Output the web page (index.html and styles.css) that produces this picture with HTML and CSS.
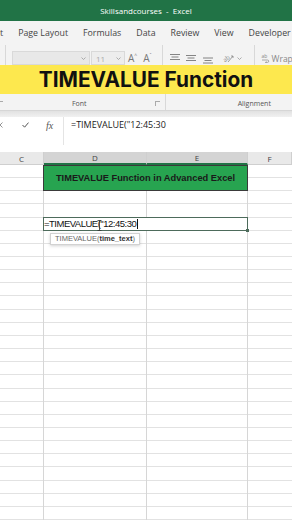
FILE: index.html
```html
<!DOCTYPE html>
<html lang="en">
<head>
  <meta charset="UTF-8">
  <meta name="viewport" content="width=device-width, initial-scale=1.0">
  <title>TIMEVALUE Function</title>
  <link rel="stylesheet" href="styles.css">
</head>
<body>
  <div class="titlebar">Skillsandcourses&nbsp; - &nbsp;Excel</div>

  <div class="tabs">
    <span class="tab tab-cut">t</span>
    <span class="tab">Page Layout</span>
    <span class="tab">Formulas</span>
    <span class="tab">Data</span>
    <span class="tab">Review</span>
    <span class="tab">View</span>
    <span class="tab">Developer</span>
  </div>

  <div class="ribbon">
    <div class="controls">
      <span class="vsep sep-first"></span>
      <div class="select font-name">
        <svg class="chev" width="5" height="3" viewBox="0 0 5 3"><polyline points="0.5,0.5 2.5,2.5 4.5,0.5" fill="none" stroke="#999" stroke-width="0.8"/></svg>
      </div>
      <div class="select font-size">
        <span>11</span>
        <svg class="chev" width="5" height="3" viewBox="0 0 5 3"><polyline points="0.5,0.5 2.5,2.5 4.5,0.5" fill="none" stroke="#999" stroke-width="0.8"/></svg>
      </div>
      <span class="size-btn grow">A<small>^</small></span>
      <span class="size-btn shrink">A<small>ˇ</small></span>
      <span class="vsep sep-font"></span>

      <!-- alignment group -->
      <svg class="align align-top" width="10" height="8" viewBox="0 0 10 8">
        <path d="M0 0.5H10M1.5 3H8.5M0 5.5H10" stroke="#777" stroke-width="0.9"/>
      </svg>
      <svg class="align align-mid" width="10" height="8" viewBox="0 0 10 8">
        <path d="M0 1.5H10M1.5 4H8.5M0 6.5H10" stroke="#777" stroke-width="0.9"/>
      </svg>
      <svg class="align align-bot" width="10" height="9" viewBox="0 0 10 9">
        <path d="M0 3H10M1.5 5.5H8.5M0 8H10" stroke="#777" stroke-width="0.9"/>
      </svg>
      <svg class="orient" width="12" height="10" viewBox="0 0 12 10">
        <text x="1" y="8" font-size="6" fill="#888" font-family="Open Sans, sans-serif" transform="rotate(-40 4 6)">ab</text>
        <path d="M6 9L11 3M9 3H11V5" fill="none" stroke="#888" stroke-width="0.8"/>
      </svg>
      <svg class="chev orient-chev" width="5" height="3" viewBox="0 0 5 3"><polyline points="0.5,0.5 2.5,2.5 4.5,0.5" fill="none" stroke="#999" stroke-width="0.8"/></svg>
      <span class="vsep sep-align"></span>
      <svg class="wrap-icon" width="9" height="10" viewBox="0 0 9 10">
        <text x="0.5" y="4.5" font-size="5" fill="#888" font-family="Open Sans, sans-serif">ab</text>
        <path d="M1 7H6.5A1.2 1.2 0 0 1 6.5 9.4H4.5M5.5 8.6L4.5 9.4L5.5 10" fill="none" stroke="#888" stroke-width="0.7"/>
      </svg>
      <span class="wrap-text">Wrap</span>
    </div>

    <div class="banner">TIMEVALUE Function</div>

    <div class="labels">
      <span class="launcher launcher-cut"></span>
      <span class="group-name group-font">Font</span>
      <span class="launcher launcher-font"></span>
      <span class="vsep sep-label"></span>
      <span class="group-name group-align">Alignment</span>
    </div>
  </div>
  <div class="ribbon-shadow"></div>

  <div class="formula-bar">
    <div class="fx-zone">
      <svg class="cancel" width="6" height="6" viewBox="0 0 6 6"><path d="M0.5 0.5L5.5 5.5M5.5 0.5L0.5 5.5" stroke="#888" stroke-width="0.9"/></svg>
      <svg class="enter" width="7" height="6" viewBox="0 0 7 6"><polyline points="0.5,3 2.6,5.2 6.5,0.6" fill="none" stroke="#555" stroke-width="1"/></svg>
      <span class="fx">fx</span>
    </div>
    <div class="fx-input">=TIMEVALUE("12:45:30</div>
  </div>

  <div class="col-heads">
    <div class="col-head">C</div>
    <div class="col-head selected">D</div>
    <div class="col-head selected">E</div>
    <div class="col-head">F</div>
  </div>

  <div class="sheet">
    <div class="title-cell">TIMEVALUE Function in Advanced Excel</div>
    <div class="edit-cell">
      <span>=TIMEVALUE("12:45:30</span><span class="caret"></span>
      <svg class="ibeam" width="5" height="11" viewBox="0 0 5 11"><path d="M0.5 0.5H4.5M2.5 0.5V10.5M0.5 10.5H4.5" fill="none" stroke="#333" stroke-width="0.8"/></svg>
    </div>
    <div class="hint">TIMEVALUE(<b>time_text</b>)</div>
  </div>
</body>
</html>
```

FILE: styles.css
```css
* {
  box-sizing: border-box;
}
html, body {
  margin: 0;
  padding: 0;
}
body {
  width: 292px;
  height: 520px;
  overflow: hidden;
  background: #fff;
  color: #333;
  font-family: "Open Sans", "Noto Sans", sans-serif;
}

/* window title */
.titlebar {
  height: 21px;
  background: #217346;
  color: #fff;
  font-size: 8px;
  display: flex;
  align-items: center;
  justify-content: center;
}

/* ribbon tabs */
.tabs {
  height: 24px;
  background: #f3f3f3;
  display: flex;
  align-items: center;
  gap: 15px;
  font-size: 8.8px;
  color: #444;
  white-space: nowrap;
  overflow: hidden;
}
.tab {
  flex-shrink: 0;
}
.tab-cut {
  margin-left: 0;
}

/* ribbon body */
.ribbon {
  background: #f3f3f3;
  border-bottom: 1px solid #d6d6d6;
}
.controls {
  height: 20px;
  padding-top: 6px;
  display: flex;
  align-items: center;
  overflow: hidden;
  white-space: nowrap;
}
.controls > * {
  flex-shrink: 0;
}
.vsep {
  width: 1px;
  flex-shrink: 0;
  background: #d8d8d8;
  align-self: stretch;
}
.controls .vsep {
  margin-top: -6px;
}
.sep-first { margin-left: 5px; }
.select {
  height: 14px;
  border: 1px solid #d9d9d9;
  display: flex;
  align-items: center;
  justify-content: space-between;
  padding: 0 3px 0 4px;
  font-size: 8px;
  color: #aaa;
}
.font-name {
  margin-left: 6px;
  width: 78px;
  background: #e8e8e8;
  justify-content: flex-end;
}
.font-size {
  margin-left: 1px;
  width: 34px;
  background: #ededed;
}
.size-btn {
  font-size: 10px;
  color: #777;
  line-height: 1;
}
.size-btn small {
  font-size: 5px;
  vertical-align: top;
}
.grow { margin-left: 3px; }
.shrink { margin-left: 6px; }
.sep-font { margin-left: 10px; }
.align-top { margin-left: 7px; }
.align-mid { margin-left: 6px; }
.align-bot { margin-left: 7px; margin-top: 3px; }
.orient { margin-left: 9px; }
.orient-chev { margin-left: 3px; }
.sep-align { margin-left: 12px; }
.wrap-icon { margin-left: 6px; }
.wrap-text {
  margin-left: 2px;
  font-size: 8.5px;
  color: #888;
}

/* caption banner */
.banner {
  height: 29px;
  background: #fde84e;
  color: #111;
  font-family: Inter, "Open Sans", sans-serif;
  font-weight: 700;
  font-size: 20.8px;
  display: flex;
  align-items: center;
  justify-content: center;
  padding-left: 0;
}

/* group labels */
.labels {
  height: 16px;
  display: flex;
  align-items: center;
  padding-top: 3px;
  font-size: 7px;
  color: #555;
}
.labels > * {
  flex-shrink: 0;
}
.labels .vsep {
  margin-top: -3px;
}
.launcher {
  width: 5px;
  height: 5px;
  border-left: 1px solid #aaa;
  border-top: 1px solid #aaa;
}
.launcher-cut { margin-left: -2px; }
.group-font { margin-left: 69px; }
.launcher-font { margin-left: 68px; }
.sep-label { margin-left: 5px; }
.group-align { margin-left: 72px; }

.ribbon-shadow {
  height: 6px;
  background: linear-gradient(#e2e2e2, #f1f1f1);
}

/* formula bar */
.formula-bar {
  height: 28px;
  display: flex;
  margin-bottom: 7px;
}
.fx-zone {
  width: 63px;
  height: 16px;
  display: flex;
  align-items: center;
  flex-shrink: 0;
}
.cancel {
  margin-left: -3px;
}
.enter {
  margin-left: 19px;
}
.fx {
  margin-left: 17px;
  font-family: "Liberation Serif", serif;
  font-style: italic;
  font-size: 10px;
  color: #555;
}
.fx-input {
  flex: 1;
  border-left: 1px solid #e4e4e4;
  padding-left: 7px;
  font-size: 9px;
  line-height: 16px;
  color: #222;
}

/* column headers */
.col-heads {
  height: 13px;
  display: grid;
  grid-template-columns: 44px 103px 101px 44px;
}
.col-head {
  background: #e9e9e9;
  border-right: 1px solid #cfcfcf;
  border-bottom: 1px solid #cfcfcf;
  font-size: 8px;
  color: #444;
  display: flex;
  align-items: center;
  justify-content: center;
}
.col-head.selected {
  background: #d4d4d4;
  border-bottom: 2px solid #217346;
}

/* worksheet */
.sheet {
  height: 355px;
  display: grid;
  grid-template-columns: 44px 103px 101px 44px;
  grid-auto-rows: 13.15px;
  background-image:
    linear-gradient(to right,
      transparent 43px, #d6d6d6 43px 44px,
      transparent 44px 146px, #d6d6d6 146px 147px,
      transparent 147px 247px, #d6d6d6 247px 248px,
      transparent 248px),
    repeating-linear-gradient(to bottom,
      transparent 0 12.15px, #e2e2e2 12.15px 13.15px);
}
.title-cell {
  grid-column: 2 / 4;
  grid-row: 1 / 3;
  margin-left: -1px;
  background: #27a450;
  border: 1px solid #3a3a3a;
  font-family: "Liberation Sans", Arial, sans-serif;
  font-weight: 700;
  font-size: 9.3px;
  color: #1a1a1a;
  display: flex;
  align-items: center;
  justify-content: center;
}
.edit-cell {
  grid-column: 2 / 4;
  grid-row: 5;
  margin: -1px 0 0 -1px;
  background: #fff;
  border: 1px solid #4d6b5b;
  font-family: "Liberation Sans", Arial, sans-serif;
  font-size: 9.5px;
  letter-spacing: -0.5px;
  color: #111;
  display: flex;
  align-items: center;
  position: relative;
}
.edit-cell::after {
  content: "";
  position: absolute;
  right: -2px;
  bottom: -2px;
  width: 3px;
  height: 3px;
  background: #4d6b5b;
}
.caret {
  width: 1px;
  height: 10px;
  margin-left: 1px;
  background: #111;
}
.ibeam {
  position: absolute;
  left: 53px;
  top: 2px;
}
.hint {
  grid-column: 2 / 4;
  grid-row: 6;
  justify-self: start;
  align-self: start;
  margin: 2px 0 0 6px;
  height: 12px;
  padding: 0 4px;
  background: #fff;
  border: 1px solid #d2d2d2;
  box-shadow: 0 1px 3px rgba(0, 0, 0, 0.18);
  font-family: "Liberation Sans", Arial, sans-serif;
  font-size: 7.5px;
  line-height: 10px;
  color: #666;
  white-space: nowrap;
}
.hint b {
  color: #333;
}
```
